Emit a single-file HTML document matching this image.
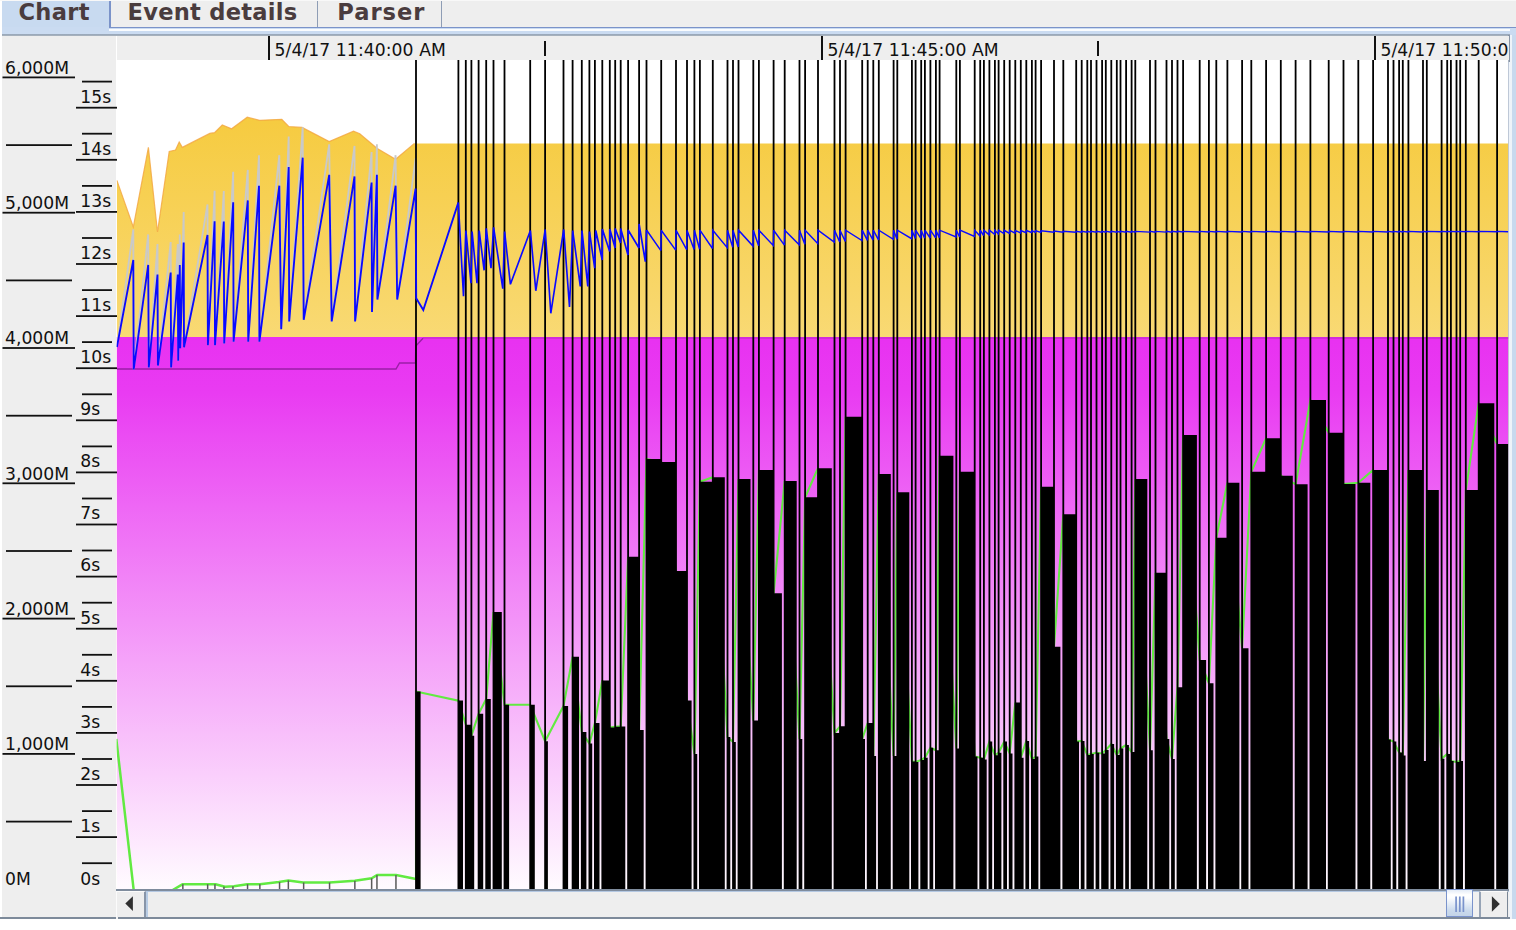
<!DOCTYPE html>
<html><head><meta charset="utf-8"><title>GCViewer</title>
<style>
html,body{margin:0;padding:0;background:#fff;}
body{width:1516px;height:930px;overflow:hidden;position:relative;font-family:"DejaVu Sans","Liberation Sans",sans-serif;}
#app{position:absolute;left:0;top:0;width:1516px;height:930px;overflow:hidden;background:#fff;}
.tabbar{position:absolute;left:2px;top:0;width:1514px;height:28px;background:#eeeeee;}
.tab{position:absolute;top:-6px;height:33px;box-sizing:border-box;font-weight:bold;font-size:22.6px;line-height:34px;color:#4a3c3e;white-space:nowrap}
.tab span{display:inline-block}
.tab.sel{left:0;width:107px;background:#c8daf0;height:42px;padding-left:16.4px;letter-spacing:.3px;top:-5.2px}
.tab.t2{left:107px;width:209px;border-left:2px solid #7b93c9;border-right:1.4px solid #8e9db5;background:#eeeeee;padding-left:16.5px;border-top-left-radius:7px;letter-spacing:.25px;top:-5.2px}
.tab.t3{left:316px;width:124px;border-right:1.4px solid #8e9db5;background:#eeeeee;padding-left:19.3px;border-top-left-radius:7px;letter-spacing:.95px;top:-5.2px}
.strip{position:absolute;left:2px;top:26.6px;width:1514px;height:9.6px;background:#cadbf1;}
.strip i{position:absolute;left:107px;right:0;top:0;height:1.9px;background:#7b93c9;}
.strip u{position:absolute;left:107px;right:6px;top:2.7px;height:1.6px;background:#fafcfe;}
.strip b{position:absolute;left:0;right:6px;bottom:0;height:2.4px;background:linear-gradient(#a9b8cc,#8f9dad 45%,#b8c0c8);}
.rstrip{position:absolute;left:1508.1px;top:35px;width:7.9px;height:883.8px;background:linear-gradient(90deg,#a3b1c6 0,#a3b1c6 1.5px,#eef3f9 1.5px,#eef3f9 3.9px,#c8d9ee 3.9px)}
.rstrip i{position:absolute;left:0;top:0;width:1.7px;height:26.5px;background:#8794a6}
.left{position:absolute;left:2px;top:35.5px;width:114.2px;height:881.5px;background:#eeeeee;}
.ruler{position:absolute;left:117px;top:35.5px;width:1391.6px;height:24.5px;background:#eeeeee;overflow:hidden;font-size:17.2px;color:#111;white-space:nowrap}
.ruler .tk{position:absolute;top:0;width:1.9px;height:24.5px;background:#111;}
.ruler .mt{position:absolute;top:5.5px;width:1.8px;height:14.5px;background:#111;}
.ruler span{position:absolute;top:4.5px;line-height:20px;letter-spacing:.07px}
.sb{position:absolute;left:116.2px;top:888.9px;width:1392.4px;height:28px;background:#eeeeee;border-top:2px solid #7f8c9d;box-sizing:border-box}
.sb .tl{position:absolute;left:30px;right:0;top:0;height:1.6px;background:#b4c8e2}
.sb .lb{position:absolute;left:0;top:0;width:30px;height:26px;border-left:1.9px solid #fbfbfb;border-top:1.9px solid #fbfbfb;border-right:2.1px solid #8895a8;box-sizing:border-box;background:#eeeeee}
.sb .lb2{position:absolute;left:30px;top:1.6px;width:1.4px;height:24.4px;background:#b8cce4}
.sb .rb{position:absolute;left:1362.8px;top:0;width:29.1px;height:26px;border-left:2px solid #97a4b6;border-top:1.9px solid #fbfbfb;border-right:1.6px solid #7a8797;box-sizing:border-box;background:#eeeeee}
.sb .gap{position:absolute;left:1357.2px;top:1.6px;width:5.6px;height:24.4px;background:#f1f1f1}
.sb .th{position:absolute;left:1329.8px;top:-2.2px;width:27.4px;height:28.6px;border:1.9px solid #7a93cc;box-sizing:border-box;background:linear-gradient(#e4ecf7,#ffffff 18%,#fdfeff 30%,#c9d9ec 80%,#c3d4e8);}
.botline{position:absolute;left:0;top:916.7px;width:1509.8px;height:2.1px;background:#7d8a9a}
.botline i{position:absolute;left:116.2px;top:0;width:1.9px;height:2.1px;background:#f4f4f4}
svg text{font-family:"DejaVu Sans","Liberation Sans",sans-serif;font-size:17.2px;fill:#111}
</style></head><body>
<div id="app">
<div style="position:absolute;left:0;top:0;width:1516px;height:1.1px;background:#f8f8f8;z-index:5"></div>
<div class="tabbar">
<div class="tab t3"><span>Parser</span></div>
<div class="tab t2"><span>Event details</span></div>
<div class="tab sel"><span>Chart</span></div>
</div>
<div class="strip"><i></i><u></u><b></b></div>
<div class="rstrip"><i></i></div>
<div class="left"></div>
<div class="ruler">
<div class="tk" style="left:150.7px"></div><span style="left:157.6px">5/4/17 11:40:00 AM</span>
<div class="mt" style="left:427.1px"></div>
<div class="tk" style="left:703.7px"></div><span style="left:710.4px">5/4/17 11:45:00 AM</span>
<div class="mt" style="left:980.1px"></div>
<div class="tk" style="left:1256.9px"></div><span style="left:1263.5px">5/4/17 11:50:00 AM</span>
</div>
<svg width="1516" height="930" viewBox="0 0 1516 930" style="position:absolute;left:0;top:0">
<defs>
<linearGradient id="gy" gradientUnits="userSpaceOnUse" x1="0" y1="118" x2="0" y2="889"><stop offset="0" stop-color="#f6cb40"/><stop offset="1" stop-color="#fffdf6"/></linearGradient>
<linearGradient id="gm" gradientUnits="userSpaceOnUse" x1="0" y1="337" x2="0" y2="889"><stop offset="0" stop-color="#e831f1"/><stop offset="0.1" stop-color="#e93bf2"/><stop offset="1" stop-color="#fffbff"/></linearGradient>
<clipPath id="cc"><rect x="116.6" y="60" width="1391.7" height="829.2"/></clipPath>
</defs>
<rect x="116.6" y="60" width="1391.7" height="829.2" fill="#fff"/>
<g clip-path="url(#cc)">
<polygon points="116.9,180.4 133.3,227 148.4,147.4 157.5,232 169.2,151.4 175.5,150 179.2,142 182.3,147.4 209.8,133.4 214.5,132.7 222.3,125 231.6,128.7 247.2,117.2 259.7,120.3 281.8,119.3 288.7,126.5 302.1,127.4 329.2,141.5 353.5,131.2 359.8,133.7 376.9,148.3 395.6,159.2 414.4,143.4 1508.3,143.4 1508.3,889.2 116.6,889.2" fill="url(#gy)"/>
<polyline points="116.9,180.4 133.3,227 148.4,147.4 157.5,232 169.2,151.4 175.5,150 179.2,142 182.3,147.4 209.8,133.4 214.5,132.7 222.3,125 231.6,128.7 247.2,117.2 259.7,120.3 281.8,119.3 288.7,126.5 302.1,127.4 329.2,141.5 353.5,131.2 359.8,133.7 376.9,148.3 395.6,159.2 414.4,143.4" fill="none" stroke="#f3a53f" stroke-width="1.2" stroke-opacity=".8"/>
<rect x="116.6" y="337" width="1391.7" height="552.2" fill="url(#gm)"/>
<polyline points="117,369 396,369 399.5,363 415.5,363 415.8,346 423,338.2" fill="none" stroke="#9a1fa6" stroke-width="1.4"/>
<polyline points="423,338 1509,338" fill="none" stroke="#9a1fa6" stroke-width="1.3" stroke-opacity=".4"/>
<polyline points="116.9,347 133.3,229.5 133.7,369.4 148.2,234.4 148.8,367.5 157.5,244.1 157.9,365.6 170.7,242.1 171.1,367.5 177.8,244.1 178.2,360.7 179.8,234.4 180.2,348.1 183.7,212.1 184,347.2 207.5,204.4 207.9,345.2 214.6,190.8 215,345.2 223.8,191.1 224.2,343.5 233.2,171.8 233.6,341.7 247.8,169.9 248.2,341.7 259,155.2 259.4,341.7 279.3,155.2 281.2,329.2 288.7,136.5 289.2,321.4 302.7,127.2 303.7,319.8 329.2,144.3 331.7,321.4 354.5,145.9 355.1,321.4 371.6,152.1 372,312 376.9,144.3 377.4,299.6 395.6,155.2 397.2,299.6 415.6,158.1 416.2,298.3" fill="none" stroke="#c9c9c9" stroke-width="1.85" stroke-linejoin="miter" stroke-miterlimit="3"/>
<polyline points="116.3,739 133.8,891 171,891 182.8,884.2 215.5,884.2 225,886.8 234,886.3 247.2,884.2 259.9,884.2 278.9,882.1 288.4,880.4 303.1,882.5 329.5,882.5 354.9,880.8 371.7,878.3 377,875.1 396,875.1 416,878.9" fill="none" stroke="#62ea42" stroke-width="2.5" stroke-linejoin="round"/>
<polyline points="416,878.9 416,691.5 458.4,700.6 465.8,724.7 471.4,735.7 478.6,713.8 486.2,699.1 493.5,612 504.5,704.8 530.2,704.8 545.1,741.2 563.5,706.1 572.6,656.7 581.8,732 589.4,743.6 594.9,723.1 602.3,680.5 609.8,727.5 615.2,726.7 620.7,726.4 628.1,556.7 639.1,730 646.5,459 661.2,462 676,571 687,700.6 694.4,754 699.9,481.7 712.8,477.3 727.5,737 733,742 738.5,479 753.3,720.6 758.9,470 773.6,593.3 784.7,481 799.5,739.1 805.1,497.3 818,468.3 834.5,733 840,726.3 845.6,416.7 862.2,739 867.7,723 873.3,756 878.8,474 893.6,756 897.3,492.3 911.9,761.4 915.6,762 921.2,760 924.9,757.7 930.4,747.8 935.9,750.3 939.6,455.7 956.3,748.5 959.9,471.7 974.7,756.5 980.2,757.7 983.9,759.4 989.4,741.6 994.9,755.2 998.6,752.8 1004.2,741.6 1009.7,753.5 1015.3,702.5 1020.8,757.7 1026.3,741 1031.9,759 1035.6,756.5 1041.1,486.7 1054,646.7 1063.3,514.3 1076.2,741.6 1081.7,741 1087.3,755 1091,754 1096.5,752.8 1102.1,753.5 1105.8,750 1111.3,744 1116.8,755 1120.5,748.5 1126.1,745 1131.6,752 1135.3,479 1150,750.3 1155.5,572.7 1166.5,739 1172,759 1177.5,687.2 1183.1,435 1199.7,660 1208.9,683.3 1216.3,537.7 1227.4,482.7 1242.1,648.3 1251.3,471.7 1266.1,438.3 1280.8,475.7 1295.6,484.3 1310.4,400 1328.7,432.7 1343.5,484 1358.3,482.7 1373.1,470 1388,739.5 1393.5,741.6 1399.1,752.4 1402.8,755.6 1408.4,470 1423,761 1426.8,490 1441.6,758.8 1447.2,753.9 1450.9,761 1456.5,762 1460.2,761 1465.8,490 1478.7,403.3 1497.1,444" fill="none" stroke="#62ea42" stroke-width="2.1"/>
<rect x="182.1" y="884.2" width="1.5" height="5" fill="#5a5a5a"/>
<rect x="206.9" y="884.2" width="1.5" height="5" fill="#5a5a5a"/>
<rect x="214.2" y="884.2" width="1.5" height="5" fill="#5a5a5a"/>
<rect x="223.2" y="886.6" width="1.5" height="2.6" fill="#5a5a5a"/>
<rect x="232.2" y="886.3" width="1.5" height="2.9" fill="#5a5a5a"/>
<rect x="246.8" y="884.2" width="1.5" height="5" fill="#5a5a5a"/>
<rect x="259.1" y="884.2" width="1.5" height="5" fill="#5a5a5a"/>
<rect x="278.8" y="882.1" width="1.5" height="7.1" fill="#5a5a5a"/>
<rect x="287.6" y="880.4" width="1.5" height="8.8" fill="#5a5a5a"/>
<rect x="302.9" y="882.5" width="1.5" height="6.7" fill="#5a5a5a"/>
<rect x="328.8" y="882.5" width="1.5" height="6.7" fill="#5a5a5a"/>
<rect x="354.1" y="880.8" width="1.5" height="8.4" fill="#5a5a5a"/>
<rect x="370.9" y="878.3" width="1.5" height="10.9" fill="#5a5a5a"/>
<rect x="376.2" y="875.1" width="1.5" height="14.1" fill="#5a5a5a"/>
<rect x="395.2" y="875.1" width="1.5" height="14.1" fill="#5a5a5a"/>
<path d="M415.1 691.5H420.6V889.2H415.1ZM415.1 60h1.8V889.2h-1.8ZM457.5 700.6H463V889.2H457.5ZM457.5 60h1.8V889.2h-1.8ZM464.9 724.7H470.8V889.2H464.9ZM464.9 60h1.8V889.2h-1.8ZM470.5 735.7H474.2V889.2H470.5ZM470.5 60h1.8V889.2h-1.8ZM477.7 713.8H483.2V889.2H477.7ZM477.7 60h1.8V889.2h-1.8ZM485.3 699.1H490.8V889.2H485.3ZM485.3 60h1.8V889.2h-1.8ZM492.6 612H501.8V889.2H492.6ZM492.6 60h1.8V889.2h-1.8ZM503.6 704.8H509.1V889.2H503.6ZM503.6 60h1.8V889.2h-1.8ZM529.3 704.8H534.8V889.2H529.3ZM529.3 60h1.8V889.2h-1.8ZM544.2 741.2H547.9V889.2H544.2ZM544.2 60h1.8V889.2h-1.8ZM562.6 706.1H568.1V889.2H562.6ZM562.6 60h1.8V889.2h-1.8ZM571.7 656.7H579V889.2H571.7ZM571.7 60h1.8V889.2h-1.8ZM580.9 732H586.4V889.2H580.9ZM580.9 60h1.8V889.2h-1.8ZM588.5 743.6H592.2V889.2H588.5ZM588.5 60h1.8V889.2h-1.8ZM594 723.1H599.5V889.2H594ZM594 60h1.8V889.2h-1.8ZM601.4 680.5H609.2V889.2H601.4ZM601.4 60h1.8V889.2h-1.8ZM608.9 727.5H614.6V889.2H608.9ZM608.9 60h1.8V889.2h-1.8ZM614.3 726.7H620.1V889.2H614.3ZM614.3 60h1.8V889.2h-1.8ZM619.8 726.4H625.3V889.2H619.8ZM619.8 60h1.8V889.2h-1.8ZM627.2 556.7H638.5V889.2H627.2ZM627.2 60h1.8V889.2h-1.8ZM638.2 730H643.7V889.2H638.2ZM638.2 60h1.8V889.2h-1.8ZM645.6 459H660.6V889.2H645.6ZM645.6 60h1.8V889.2h-1.8ZM660.3 462H675.4V889.2H660.3ZM660.3 60h1.8V889.2h-1.8ZM675.1 571H686.4V889.2H675.1ZM675.1 60h1.8V889.2h-1.8ZM686.1 700.6H691.6V889.2H686.1ZM686.1 60h1.8V889.2h-1.8ZM693.5 754H697.2V889.2H693.5ZM693.5 60h1.8V889.2h-1.8ZM699 481.7H712.2V889.2H699ZM699 60h1.8V889.2h-1.8ZM711.9 477.3H724.8V889.2H711.9ZM711.9 60h1.8V889.2h-1.8ZM726.6 737H730.3V889.2H726.6ZM726.6 60h1.8V889.2h-1.8ZM732.1 742H735.8V889.2H732.1ZM732.1 60h1.8V889.2h-1.8ZM737.6 479H750.5V889.2H737.6ZM737.6 60h1.8V889.2h-1.8ZM752.4 720.6H758.3V889.2H752.4ZM752.4 60h1.8V889.2h-1.8ZM758 470H773V889.2H758ZM758 60h1.8V889.2h-1.8ZM772.7 593.3H781.9V889.2H772.7ZM772.7 60h1.8V889.2h-1.8ZM783.8 481H796.7V889.2H783.8ZM783.8 60h1.8V889.2h-1.8ZM798.6 739.1H802.3V889.2H798.6ZM798.6 60h1.8V889.2h-1.8ZM804.2 497.3H817.4V889.2H804.2ZM804.2 60h1.8V889.2h-1.8ZM817.1 468.3H831.8V889.2H817.1ZM817.1 60h1.8V889.2h-1.8ZM833.6 733H839.4V889.2H833.6ZM833.6 60h1.8V889.2h-1.8ZM839.1 726.3H845V889.2H839.1ZM839.1 60h1.8V889.2h-1.8ZM844.7 416.7H861.6V889.2H844.7ZM844.7 60h1.8V889.2h-1.8ZM861.3 739H865V889.2H861.3ZM861.3 60h1.8V889.2h-1.8ZM866.8 723H872.7V889.2H866.8ZM866.8 60h1.8V889.2h-1.8ZM872.4 756H876.1V889.2H872.4ZM872.4 60h1.8V889.2h-1.8ZM877.9 474H890.8V889.2H877.9ZM877.9 60h1.8V889.2h-1.8ZM892.7 756H896.7V889.2H892.7ZM892.7 60h1.8V889.2h-1.8ZM896.4 492.3H909.3V889.2H896.4ZM896.4 60h1.8V889.2h-1.8ZM911 761.4H915V889.2H911ZM911 60h1.8V889.2h-1.8ZM914.7 762H918.4V889.2H914.7ZM914.7 60h1.8V889.2h-1.8ZM920.3 760H924.3V889.2H920.3ZM920.3 60h1.8V889.2h-1.8ZM924 757.7H927.7V889.2H924ZM924 60h1.8V889.2h-1.8ZM929.5 747.8H933.2V889.2H929.5ZM929.5 60h1.8V889.2h-1.8ZM935 750.3H939V889.2H935ZM935 60h1.8V889.2h-1.8ZM938.7 455.7H953.4V889.2H938.7ZM938.7 60h1.8V889.2h-1.8ZM955.4 748.5H959.3V889.2H955.4ZM955.4 60h1.8V889.2h-1.8ZM959 471.7H974.1V889.2H959ZM959 60h1.8V889.2h-1.8ZM973.8 756.5H977.5V889.2H973.8ZM973.8 60h1.8V889.2h-1.8ZM979.3 757.7H983.3V889.2H979.3ZM979.3 60h1.8V889.2h-1.8ZM983 759.4H986.7V889.2H983ZM983 60h1.8V889.2h-1.8ZM988.5 741.6H992.2V889.2H988.5ZM988.5 60h1.8V889.2h-1.8ZM994 755.2H998V889.2H994ZM994 60h1.8V889.2h-1.8ZM997.7 752.8H1001.4V889.2H997.7ZM997.7 60h1.8V889.2h-1.8ZM1003.3 741.6H1007V889.2H1003.3ZM1003.3 60h1.8V889.2h-1.8ZM1008.8 753.5H1012.5V889.2H1008.8ZM1008.8 60h1.8V889.2h-1.8ZM1014.4 702.5H1020.2V889.2H1014.4ZM1014.4 60h1.8V889.2h-1.8ZM1019.9 757.7H1023.6V889.2H1019.9ZM1019.9 60h1.8V889.2h-1.8ZM1025.4 741H1029.1V889.2H1025.4ZM1025.4 60h1.8V889.2h-1.8ZM1031 759H1035V889.2H1031ZM1031 60h1.8V889.2h-1.8ZM1034.7 756.5H1038.4V889.2H1034.7ZM1034.7 60h1.8V889.2h-1.8ZM1040.2 486.7H1053.4V889.2H1040.2ZM1040.2 60h1.8V889.2h-1.8ZM1053.1 646.7H1060.4V889.2H1053.1ZM1053.1 60h1.8V889.2h-1.8ZM1062.4 514.3H1075.6V889.2H1062.4ZM1062.4 60h1.8V889.2h-1.8ZM1075.3 741.6H1079V889.2H1075.3ZM1075.3 60h1.8V889.2h-1.8ZM1080.8 741H1084.5V889.2H1080.8ZM1080.8 60h1.8V889.2h-1.8ZM1086.4 755H1090.4V889.2H1086.4ZM1086.4 60h1.8V889.2h-1.8ZM1090.1 754H1093.8V889.2H1090.1ZM1090.1 60h1.8V889.2h-1.8ZM1095.6 752.8H1099.3V889.2H1095.6ZM1095.6 60h1.8V889.2h-1.8ZM1101.2 753.5H1105.2V889.2H1101.2ZM1101.2 60h1.8V889.2h-1.8ZM1104.9 750H1108.6V889.2H1104.9ZM1104.9 60h1.8V889.2h-1.8ZM1110.4 744H1114.1V889.2H1110.4ZM1110.4 60h1.8V889.2h-1.8ZM1115.9 755H1119.9V889.2H1115.9ZM1115.9 60h1.8V889.2h-1.8ZM1119.6 748.5H1123.3V889.2H1119.6ZM1119.6 60h1.8V889.2h-1.8ZM1125.2 745H1128.9V889.2H1125.2ZM1125.2 60h1.8V889.2h-1.8ZM1130.7 752H1134.7V889.2H1130.7ZM1130.7 60h1.8V889.2h-1.8ZM1134.4 479H1147.3V889.2H1134.4ZM1134.4 60h1.8V889.2h-1.8ZM1149.1 750.3H1152.8V889.2H1149.1ZM1149.1 60h1.8V889.2h-1.8ZM1154.6 572.7H1165.9V889.2H1154.6ZM1154.6 60h1.8V889.2h-1.8ZM1165.6 739H1169.3V889.2H1165.6ZM1165.6 60h1.8V889.2h-1.8ZM1171.1 759H1174.8V889.2H1171.1ZM1171.1 60h1.8V889.2h-1.8ZM1176.6 687.2H1182.5V889.2H1176.6ZM1176.6 60h1.8V889.2h-1.8ZM1182.2 435H1196.9V889.2H1182.2ZM1182.2 60h1.8V889.2h-1.8ZM1198.8 660H1206.1V889.2H1198.8ZM1198.8 60h1.8V889.2h-1.8ZM1208 683.3H1213.5V889.2H1208ZM1208 60h1.8V889.2h-1.8ZM1215.4 537.7H1226.8V889.2H1215.4ZM1215.4 60h1.8V889.2h-1.8ZM1226.5 482.7H1239.4V889.2H1226.5ZM1226.5 60h1.8V889.2h-1.8ZM1241.2 648.3H1248.5V889.2H1241.2ZM1241.2 60h1.8V889.2h-1.8ZM1250.4 471.7H1265.5V889.2H1250.4ZM1250.4 60h1.8V889.2h-1.8ZM1265.2 438.3H1280.2V889.2H1265.2ZM1265.2 60h1.8V889.2h-1.8ZM1279.9 475.7H1292.8V889.2H1279.9ZM1279.9 60h1.8V889.2h-1.8ZM1294.7 484.3H1307.6V889.2H1294.7ZM1294.7 60h1.8V889.2h-1.8ZM1309.5 400H1326V889.2H1309.5ZM1309.5 60h1.8V889.2h-1.8ZM1327.8 432.7H1342.9V889.2H1327.8ZM1327.8 60h1.8V889.2h-1.8ZM1342.6 484H1355.5V889.2H1342.6ZM1342.6 60h1.8V889.2h-1.8ZM1357.4 482.7H1370.3V889.2H1357.4ZM1357.4 60h1.8V889.2h-1.8ZM1372.2 470H1387.4V889.2H1372.2ZM1372.2 60h1.8V889.2h-1.8ZM1387.1 739.5H1390.8V889.2H1387.1ZM1387.1 60h1.8V889.2h-1.8ZM1392.6 741.6H1396.3V889.2H1392.6ZM1392.6 60h1.8V889.2h-1.8ZM1398.2 752.4H1402.2V889.2H1398.2ZM1398.2 60h1.8V889.2h-1.8ZM1401.9 755.6H1405.6V889.2H1401.9ZM1401.9 60h1.8V889.2h-1.8ZM1407.5 470H1422.4V889.2H1407.5ZM1407.5 60h1.8V889.2h-1.8ZM1422.1 761H1426.2V889.2H1422.1ZM1422.1 60h1.8V889.2h-1.8ZM1425.9 490H1438.8V889.2H1425.9ZM1425.9 60h1.8V889.2h-1.8ZM1440.7 758.8H1444.4V889.2H1440.7ZM1440.7 60h1.8V889.2h-1.8ZM1446.3 753.9H1450.3V889.2H1446.3ZM1446.3 60h1.8V889.2h-1.8ZM1450 761H1453.7V889.2H1450ZM1450 60h1.8V889.2h-1.8ZM1455.6 762H1459.6V889.2H1455.6ZM1455.6 60h1.8V889.2h-1.8ZM1459.3 761H1463V889.2H1459.3ZM1459.3 60h1.8V889.2h-1.8ZM1464.9 490H1478.1V889.2H1464.9ZM1464.9 60h1.8V889.2h-1.8ZM1477.8 403.3H1494.3V889.2H1477.8ZM1477.8 60h1.8V889.2h-1.8ZM1496.2 444H1508.3V889.2H1496.2ZM1496.2 60h1.8V889.2h-1.8Z" fill="#000"/>
<polyline points="116.9,347 133.3,260 133.7,369.4 148.2,264.9 148.8,367.5 157.5,274.6 157.9,365.6 170.7,272.6 171.1,367.5 177.8,274.6 178.2,360.7 179.8,264.9 180.2,348.1 183.7,242.6 184,347.2 207.5,234.9 207.9,345.2 214.6,221.3 215,345.2 223.8,221.6 224.2,343.5 233.2,202.3 233.6,341.7 247.8,200.4 248.2,341.7 259,185.7 259.4,341.7 279.3,185.7 281.2,329.2 288.7,167 289.2,321.4 302.7,157.7 303.7,319.8 329.2,174.8 331.7,321.4 354.5,176.4 355.1,321.4 371.6,182.6 372,312 376.9,174.8 377.4,299.6 395.6,185.7 397.2,299.6 415.6,188.6 416.2,298.3 423.3,310.1 458.3,202.6" fill="none" stroke="#0a0aff" stroke-width="1.85" stroke-linejoin="miter" stroke-miterlimit="3"/>
<polyline points="458.3,202.6 463.5,296.1 465.9,230.5 471,283.2 472.1,231.6 477,283.2 479.2,230.5 484.1,270.3 486.3,228.4 491,268.2 493.6,227.3 502.8,288.6 504.6,231.6 510.4,284.3 530.4,230.5 535.8,290.8 545.2,229.5 550.8,313.3 563.7,229.5 569.5,306.9 572.7,230.5 580.3,286.5 582,230.5 587.8,286.5 589.5,231.6 594.7,268.2 595.8,230.5 602.2,260 602.3,229 609.7,251.5 609.8,229 615.1,248 615.2,228.5 620.6,243 620.7,228.5 628,255 628.1,230 639,248 639.1,224 645.3,261.7 646.5,230" fill="none" stroke="#0a0aff" stroke-width="1.65" stroke-linejoin="miter" stroke-miterlimit="3"/>
<polyline points="646.5,230 660.9,250.6 661.2,230.2 675.7,250.1 676,230.2 686.7,249.7 687,230.2 694.1,249.4 694.4,230.2 699.6,249.2 699.9,230.2 712.5,248.5 712.8,230.2 727.2,247.6 727.5,230.2 732.7,247.3 733,230.2 738.2,247 738.5,230.2 753,246.1 753.3,230.2 758.6,245.8 758.9,230.2 773.3,245.4 773.6,230.2 784.4,245.1 784.7,230.2 799.2,244.7 799.5,230.2 804.8,244.3 805.1,230.2 817.7,243.4 818,230.2 834.2,242.2 834.5,230.2 839.7,241.9 840,230.2 845.3,241.5 845.6,230.2 861.9,240.5 862.2,230.2 867.4,240.3 867.7,230.2 873,240.1 873.3,230.2 878.5,239.9 878.8,230.2 893.3,239.3 893.6,230.2 897,239.2 897.3,230.2 911.6,238.7 911.9,230.2 915.3,238.5 915.6,230.2 920.9,238.3 921.2,230.2 924.6,238.2 924.9,230.2 930.1,238 930.4,230.2 935.6,237.8 935.9,230.2 939.3,237.6 939.6,230.2 956,237 956.3,230.2 959.6,236.9 959.9,230.2 974.4,236.4 974.7,230.2 979.9,235.9 980.2,230.2 983.6,235.5 983.9,230.2 989.1,234.9 989.4,230.2 994.6,234.3 994.9,230.2 998.3,233.9 998.6,230.2 1003.9,233.6 1004.2,230.3 1009.4,233.4 1009.7,230.4 1015,233.1 1015.3,230.5 1020.5,232.9 1020.8,230.5 1026,232.7 1026.3,230.6 1031.6,232.5 1031.9,230.7 1035.3,232.4 1035.6,230.8 1040.8,232.4 1041.1,230.9 1053.7,232.2 1054,231.1 1063,232.1 1063.3,231.3 1075.9,232.3 1076.2,231.4 1081.4,232.3 1081.7,231.4 1087,232.2 1087.3,231.4 1090.7,232.2 1091,231.4 1096.2,232.2 1096.5,231.4 1101.8,232.2 1102.1,231.4 1105.5,232.2 1105.8,231.4 1111,232.2 1111.3,231.4 1116.5,232.2 1116.8,231.4 1120.2,232.2 1120.5,231.4 1125.8,232.2 1126.1,231.4 1131.3,232.1 1131.6,231.4 1135,232.1 1135.3,231.4 1149.7,232.1 1150,231.4 1155.2,232.1 1155.5,231.4 1166.2,232.1 1166.5,231.4 1171.7,232.1 1172,231.4 1177.2,232 1177.5,231.4 1182.8,232 1183.1,231.4 1199.4,232 1199.7,231.4 1208.6,232 1208.9,231.4 1216,232 1216.3,231.4 1227.1,232 1227.4,231.4 1241.8,232 1242.1,231.4 1251,232 1251.3,231.4 1265.8,232 1266.1,231.4 1280.5,231.9 1280.8,231.4 1295.3,231.9 1295.6,231.4 1310.1,231.9 1310.4,231.4 1328.4,231.9 1328.7,231.4 1343.2,231.9 1343.5,231.4 1358,231.9 1358.3,231.4 1372.8,231.9 1373.1,231.4 1387.7,231.9 1388,231.4 1393.2,231.9 1393.5,231.4 1398.8,231.9 1399.1,231.4 1402.5,231.9 1402.8,231.4 1408.1,231.9 1408.4,231.4 1422.7,231.9 1423,231.4 1426.5,231.9 1426.8,231.4 1441.3,231.8 1441.6,231.4 1446.9,231.8 1447.2,231.4 1450.6,231.8 1450.9,231.4 1456.2,231.8 1456.5,231.4 1459.9,231.8 1460.2,231.4 1465.5,231.8 1465.8,231.4 1478.4,231.8 1478.7,231.4 1496.8,231.8 1497.1,231.4 1508.3,231.8" fill="none" stroke="#0a0aff" stroke-width="1.45" stroke-linejoin="miter" stroke-miterlimit="3"/>
</g>
<g>
<text x="5" y="884.8">0M</text>
<rect x="6" y="820.7" width="66" height="1.8" fill="#111"/>
<rect x="2.5" y="753" width="72.5" height="1.8" fill="#111"/>
<text x="5" y="750.2">1,000M</text>
<rect x="6" y="685.4" width="66" height="1.8" fill="#111"/>
<rect x="2.5" y="617.7" width="72.5" height="1.8" fill="#111"/>
<text x="5" y="614.9">2,000M</text>
<rect x="6" y="550.1" width="66" height="1.8" fill="#111"/>
<rect x="2.5" y="482.4" width="72.5" height="1.8" fill="#111"/>
<text x="5" y="479.6">3,000M</text>
<rect x="6" y="414.8" width="66" height="1.8" fill="#111"/>
<rect x="2.5" y="347.1" width="72.5" height="1.8" fill="#111"/>
<text x="5" y="344.3">4,000M</text>
<rect x="6" y="279.5" width="66" height="1.8" fill="#111"/>
<rect x="2.5" y="211.8" width="72.5" height="1.8" fill="#111"/>
<text x="5" y="209">5,000M</text>
<rect x="6" y="144.2" width="66" height="1.8" fill="#111"/>
<rect x="2.5" y="76.5" width="72.5" height="1.8" fill="#111"/>
<text x="5" y="73.7">6,000M</text>
<text x="80.3" y="884.6">0s</text>
<rect x="82" y="862.3" width="30" height="1.8" fill="#111"/>
<rect x="76" y="836.2" width="41" height="1.8" fill="#111"/>
<text x="80.3" y="831.9">1s</text>
<rect x="82" y="810.2" width="30" height="1.8" fill="#111"/>
<rect x="76" y="784.1" width="41" height="1.8" fill="#111"/>
<text x="80.3" y="779.8">2s</text>
<rect x="82" y="758.1" width="30" height="1.8" fill="#111"/>
<rect x="76" y="732" width="41" height="1.8" fill="#111"/>
<text x="80.3" y="727.7">3s</text>
<rect x="82" y="706" width="30" height="1.8" fill="#111"/>
<rect x="76" y="679.9" width="41" height="1.8" fill="#111"/>
<text x="80.3" y="675.6">4s</text>
<rect x="82" y="653.9" width="30" height="1.8" fill="#111"/>
<rect x="76" y="627.8" width="41" height="1.8" fill="#111"/>
<text x="80.3" y="623.5">5s</text>
<rect x="82" y="601.8" width="30" height="1.8" fill="#111"/>
<rect x="76" y="575.7" width="41" height="1.8" fill="#111"/>
<text x="80.3" y="571.4">6s</text>
<rect x="82" y="549.6" width="30" height="1.8" fill="#111"/>
<rect x="76" y="523.6" width="41" height="1.8" fill="#111"/>
<text x="80.3" y="519.3">7s</text>
<rect x="82" y="497.6" width="30" height="1.8" fill="#111"/>
<rect x="76" y="471.5" width="41" height="1.8" fill="#111"/>
<text x="80.3" y="467.2">8s</text>
<rect x="82" y="445.5" width="30" height="1.8" fill="#111"/>
<rect x="76" y="419.4" width="41" height="1.8" fill="#111"/>
<text x="80.3" y="415.1">9s</text>
<rect x="82" y="393.4" width="30" height="1.8" fill="#111"/>
<rect x="76" y="367.3" width="41" height="1.8" fill="#111"/>
<text x="80.3" y="363">10s</text>
<rect x="82" y="341.2" width="30" height="1.8" fill="#111"/>
<rect x="76" y="315.2" width="41" height="1.8" fill="#111"/>
<text x="80.3" y="310.9">11s</text>
<rect x="82" y="289.2" width="30" height="1.8" fill="#111"/>
<rect x="76" y="263.1" width="41" height="1.8" fill="#111"/>
<text x="80.3" y="258.8">12s</text>
<rect x="82" y="237.1" width="30" height="1.8" fill="#111"/>
<rect x="76" y="211" width="41" height="1.8" fill="#111"/>
<text x="80.3" y="206.7">13s</text>
<rect x="82" y="185" width="30" height="1.8" fill="#111"/>
<rect x="76" y="158.9" width="41" height="1.8" fill="#111"/>
<text x="80.3" y="154.6">14s</text>
<rect x="82" y="132.8" width="30" height="1.8" fill="#111"/>
<rect x="76" y="106.8" width="41" height="1.8" fill="#111"/>
<text x="80.3" y="102.5">15s</text>
<rect x="82" y="80.7" width="30" height="1.8" fill="#111"/>
</g>
</svg>
<div class="sb"><div class="tl"></div>
<div class="lb"><svg width="28" height="26" style="position:absolute;left:-1.9px;top:-1.9px"><path d="M10.3 13.6L17.9 6.2V21Z" fill="#303030"/></svg></div><div class="lb2"></div>
<div class="th"><svg width="24" height="24" style="position:absolute;left:-1.9px;top:-1.9px"><path d="M11.1 8.6v16.5M14.8 8.6v16.5M18.4 8.6v16.5" stroke="#7a93cc" stroke-width="1.7"/></svg></div>
<div class="gap"></div>
<div class="rb"><svg width="28" height="26" style="position:absolute;left:-2px;top:-1.9px"><path d="M20.8 13.9L12.9 6.2V21.7Z" fill="#303030"/></svg></div>
</div>
<div class="botline"><i></i></div>
</div>
</body></html>
